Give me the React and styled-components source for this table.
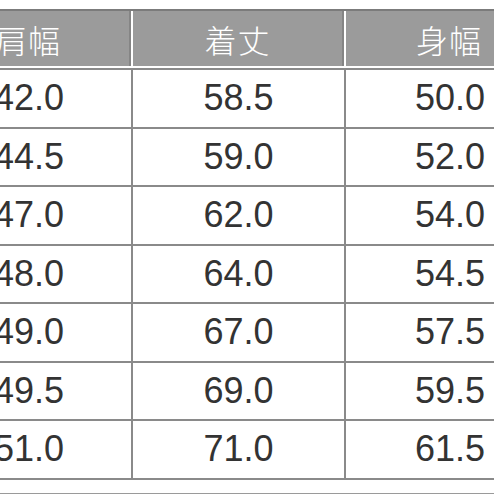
import styled, { createGlobalStyle } from "styled-components";

const GlobalStyle = createGlobalStyle`
  html, body {
    margin: 0;
    padding: 0;
    background: #ffffff;
    overflow: hidden;
  }
`;

const Page = styled.div`
  width: 494px;
  height: 494px;
  overflow: hidden;
  padding-top: 9px;
  box-sizing: border-box;
  font-family: "Liberation Sans", "Noto Sans CJK JP", sans-serif;
`;

// the table is wider than the shot, so it starts left of the frame
const SizeTable = styled.div`
  width: 629px;
  margin-left: -73px;
  border-top: 2px solid #7b7b7b;
  border-bottom: 2px solid #8a8a8a;
`;

const HeaderRow = styled.div`
  display: grid;
  grid-template-columns: 204px 211px 208px;
  column-gap: 2px;
  padding-bottom: 2px;
  background: #ffffff;
`;

const HeadCell = styled.div`
  height: 55px;
  background: #9b9b9b;
  border-right: 2px solid #858585;
  color: #ffffff;
  font-size: 32px;
  font-weight: 300;
  display: flex;
  align-items: center;
  justify-content: center;
  letter-spacing: 1px;
`;

const Row = styled.div`
  display: grid;
  grid-template-columns: 206px 213px 210px;
  border-top: 2px solid #8a8a8a;
`;

const Cell = styled.div`
  height: 56.5px;
  border-right: 2px solid #8a8a8a;
  color: #333333;
  font-size: 36px;
  display: flex;
  align-items: center;
  justify-content: center;
`;

const NextTable = styled.div`
  margin-top: 13px;
  width: 494px;
  border-top: 2px solid #9a9a9a;
`;

const headers = ["肩幅", "着丈", "身幅"];
const rows = [
  ["42.0", "58.5", "50.0"],
  ["44.5", "59.0", "52.0"],
  ["47.0", "62.0", "54.0"],
  ["48.0", "64.0", "54.5"],
  ["49.0", "67.0", "57.5"],
  ["49.5", "69.0", "59.5"],
  ["51.0", "71.0", "61.5"],
];

export default function App() {
  return (
    <>
      <GlobalStyle />
      <Page>
        <SizeTable>
          <HeaderRow>
            {headers.map((h) => (
              <HeadCell key={h}>{h}</HeadCell>
            ))}
          </HeaderRow>
          {rows.map((r, i) => (
            <Row key={i}>
              {r.map((v, j) => (
                <Cell key={j}>{v}</Cell>
              ))}
            </Row>
          ))}
        </SizeTable>
        <NextTable />
      </Page>
    </>
  );
}
